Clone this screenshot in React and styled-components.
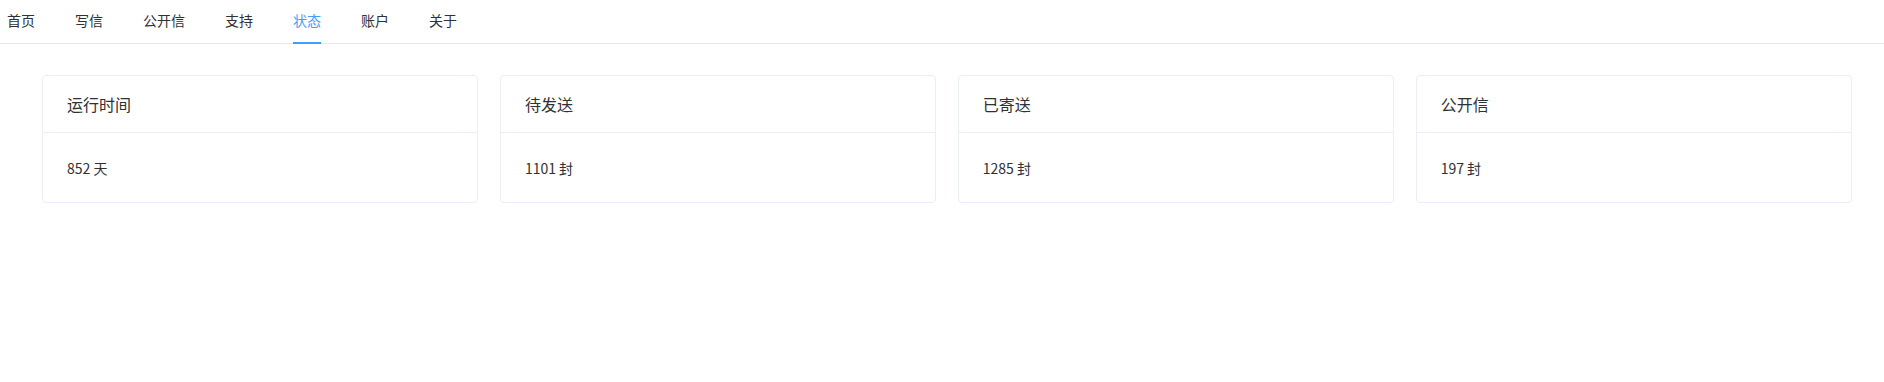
import styled, { createGlobalStyle } from 'styled-components';

const tabs = ['首页', '写信', '公开信', '支持', '状态', '账户', '关于'];

const stats = [
  { title: '运行时间', value: '852 天' },
  { title: '待发送', value: '1101 封' },
  { title: '已寄送', value: '1285 封' },
  { title: '公开信', value: '197 封' },
];

const App = () => {
  return (
    <>
      <GlobalStyle />
      <Nav>
        {tabs.map((t) => (
          <Tab key={t} active={t === '状态'}>
            {t}
          </Tab>
        ))}
      </Nav>
      <Main>
        {stats.map((s) => (
          <Card key={s.title}>
            <CardHeader>{s.title}</CardHeader>
            <CardBody>{s.value}</CardBody>
          </Card>
        ))}
      </Main>
    </>
  );
};

const GlobalStyle = createGlobalStyle`
  body {
    margin: 0;
    background: #fff;
    font-family: "Noto Sans CJK SC", "Noto Sans", sans-serif;
    color: #303133;
  }
`;

const Nav = styled.div`
  display: flex;
  height: 43px;
  padding-left: 7px;
  border-bottom: 1px solid #e4e7ed;
`;

const Tab = styled.div`
  position: relative;
  padding: 0 20px;
  line-height: 41px;
  font-size: 14px;
  color: ${(props) => (props.active ? '#409eff' : '#303133')};

  &:first-child {
    padding-left: 0;
  }

  &::after {
    content: '';
    display: ${(props) => (props.active ? 'block' : 'none')};
    position: absolute;
    left: 20px;
    right: 20px;
    bottom: -1px;
    height: 2px;
    background: #409eff;
  }
`;

const Main = styled.div`
  display: grid;
  grid-template-columns: repeat(4, 1fr);
  gap: 21.5px;
  padding: 31px 32px 0 42px;
`;

const Card = styled.div`
  border: 1px solid #ebeef5;
  border-radius: 4px;
  background: #fff;
`;

const CardHeader = styled.div`
  height: 56px;
  display: flex;
  align-items: center;
  padding: 0 24px;
  font-size: 16px;
  border-bottom: 1px solid #ebeef5;
`;

const CardBody = styled.div`
  height: 69px;
  display: flex;
  align-items: center;
  padding: 0 24px;
  font-size: 14px;
`;

export default App;
